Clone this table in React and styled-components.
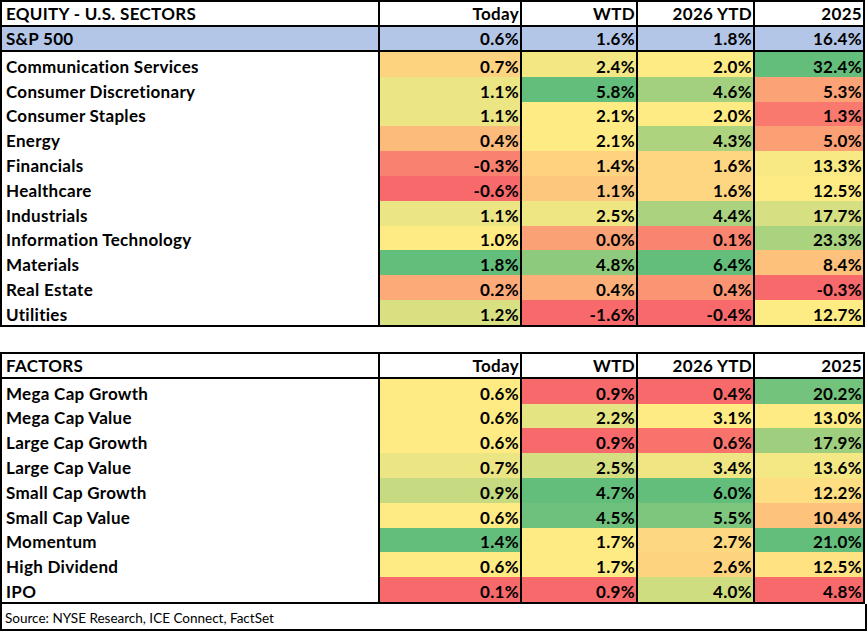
import React from 'react';
import styled, { createGlobalStyle } from 'styled-components';

const Global = createGlobalStyle`
  html, body { margin: 0; padding: 0; background: #ffffff; }
  body { font-family: Lato, "Liberation Sans", sans-serif; color: #000; }
`;

const COLS = '376px 142px 116px 117px 110px';

const Page = styled.div`
  display: flex;
  flex-direction: column;
  align-items: flex-start;
  gap: 25px;
`;

const Block = styled.div`
  display: flex;
  flex-direction: column;
  align-items: flex-start;
`;

const Table = styled.div`
  display: flex;
  flex-direction: column;
  border: 2px solid #000;
`;

const Row = styled.div`
  display: grid;
  grid-template-columns: ${COLS};
  height: ${p => (p.$head ? '25px' : '24.8px')};
  box-sizing: border-box;
  border-bottom: ${p => (p.$head ? '2px solid #000' : 'none')};
  background: ${p => p.$bg || 'transparent'};
`;

const Label = styled.div`
  display: flex;
  align-items: flex-end;
  padding: 0 0 ${p => (p.$head ? '1px' : '0')} 4px;
  font-weight: 700;
  font-size: 17px;
  letter-spacing: 0.3px;
  white-space: nowrap;
  overflow: hidden;
`;

const Num = styled.div`
  display: flex;
  align-items: flex-end;
  justify-content: flex-end;
  padding: 0 1px ${p => (p.$head ? '1px' : '0')} 0;
  border-left: 2px solid #000;
  font-weight: 700;
  font-size: 17px;
  letter-spacing: 0.3px;
  white-space: nowrap;
  overflow: hidden;
  background: ${p => p.$bg || 'transparent'};
`;

const Source = styled.div`
  width: 867px;
  height: 27px;
  box-sizing: border-box;
  border: 2px solid #000;
  border-top: none;
  display: flex;
  align-items: flex-end;
  padding: 0 0 3px 3px;
  font-size: 13.5px;
  font-weight: 400;
`;

const RED = [248, 105, 107];
const YEL = [255, 235, 132];
const GRN = [99, 190, 123];

const mix = (a, b, t) => a.map((v, i) => Math.round(v + (b[i] - v) * t));

function median(arr) {
  const s = [...arr].sort((x, y) => x - y);
  const m = Math.floor(s.length / 2);
  return s.length % 2 ? s[m] : (s[m - 1] + s[m]) / 2;
}

function scaleColor(v, col) {
  const min = Math.min(...col);
  const max = Math.max(...col);
  const mid = median(col);
  let c;
  if (v <= mid) {
    c = mid === min ? YEL : mix(RED, YEL, (v - min) / (mid - min));
  } else {
    c = max === mid ? YEL : mix(YEL, GRN, (v - mid) / (max - mid));
  }
  return `rgb(${c[0]},${c[1]},${c[2]})`;
}

const HEADERS = ['Today', 'WTD', '2026 YTD', '2025'];

const sectors = [
  ['Communication Services', 0.7, 2.4, 2.0, 32.4],
  ['Consumer Discretionary', 1.1, 5.8, 4.6, 5.3],
  ['Consumer Staples', 1.1, 2.1, 2.0, 1.3],
  ['Energy', 0.4, 2.1, 4.3, 5.0],
  ['Financials', -0.3, 1.4, 1.6, 13.3],
  ['Healthcare', -0.6, 1.1, 1.6, 12.5],
  ['Industrials', 1.1, 2.5, 4.4, 17.7],
  ['Information Technology', 1.0, 0.0, 0.1, 23.3],
  ['Materials', 1.8, 4.8, 6.4, 8.4],
  ['Real Estate', 0.2, 0.4, 0.4, -0.3],
  ['Utilities', 1.2, -1.6, -0.4, 12.7],
];

const factors = [
  ['Mega Cap Growth', 0.6, 0.9, 0.4, 20.2],
  ['Mega Cap Value', 0.6, 2.2, 3.1, 13.0],
  ['Large Cap Growth', 0.6, 0.9, 0.6, 17.9],
  ['Large Cap Value', 0.7, 2.5, 3.4, 13.6],
  ['Small Cap Growth', 0.9, 4.7, 6.0, 12.2],
  ['Small Cap Value', 0.6, 4.5, 5.5, 10.4],
  ['Momentum', 1.4, 1.7, 2.7, 21.0],
  ['High Dividend', 0.6, 1.7, 2.6, 12.5],
  ['IPO', 0.1, 0.9, 4.0, 4.8],
];

const fmt = v => `${v.toFixed(1)}%`;

function HeatTable({ title, summary, rows }) {
  const cols = [1, 2, 3, 4].map(i => rows.map(r => r[i]));
  return (
    <Table>
      <Row $head>
        <Label $head>{title}</Label>
        {HEADERS.map(h => (
          <Num key={h} $head>{h}</Num>
        ))}
      </Row>
      {summary && (
        <Row $head $bg="#b4c6e7">
          <Label $head>{summary[0]}</Label>
          {summary.slice(1).map((v, i) => (
            <Num key={i} $head>{fmt(v)}</Num>
          ))}
        </Row>
      )}
      {rows.map(r => (
        <Row key={r[0]}>
          <Label>{r[0]}</Label>
          {r.slice(1).map((v, i) => (
            <Num key={i} $bg={scaleColor(v, cols[i])}>
              {fmt(v)}
            </Num>
          ))}
        </Row>
      ))}
    </Table>
  );
}

export default function App() {
  return (
    <>
      <Global />
      <Page>
        <HeatTable
          title="EQUITY - U.S. SECTORS"
          summary={['S&P 500', 0.6, 1.6, 1.8, 16.4]}
          rows={sectors}
        />
        <Block>
          <HeatTable title="FACTORS" rows={factors} />
          <Source>Source: NYSE Research, ICE Connect, FactSet</Source>
        </Block>
      </Page>
    </>
  );
}
